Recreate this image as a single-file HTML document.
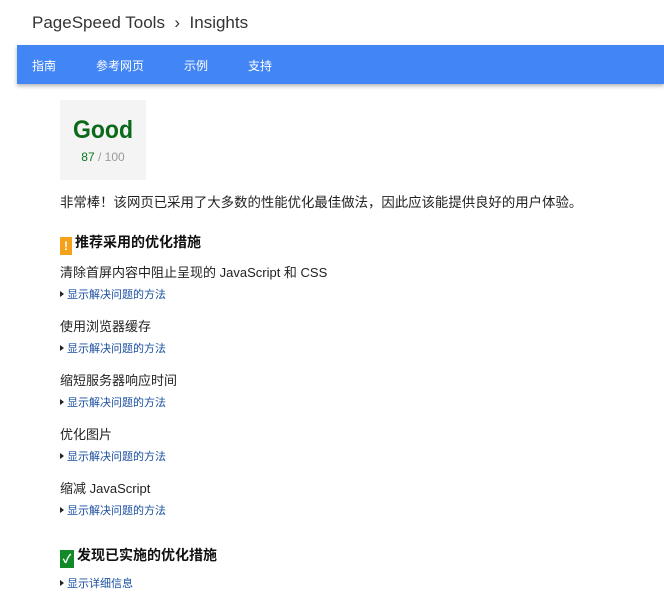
<!DOCTYPE html>
<html><head><meta charset="utf-8"><style>
body{margin:0;width:664px;height:600px;background:#fff;font-family:"Liberation Sans","Noto Sans CJK SC",sans-serif;position:relative;overflow:hidden;color:#222}
.a{position:absolute;white-space:nowrap}
.t{left:32px;top:13px;font-size:17px;color:#333}
.bar{left:17px;top:45px;width:647px;height:39px;background:#4285f4;box-shadow:0 2px 4px rgba(0,0,0,.3)}
.bar span{position:absolute;top:12px;font-size:12px;color:#fff}
.box{left:60px;top:100px;width:86px;height:80px;background:#f4f4f4;text-align:center}
.g{font-size:25px;font-weight:bold;color:#0b6a1a;margin-top:16px;line-height:28px;transform:scaleX(.92)}
.s{font-size:12px;color:#999;margin-top:6px}
.it{left:60px;font-size:13px;color:#222}
.lk{left:60px;font-size:11px;color:#1a4fa0}
.lk:before{content:"";display:inline-block;border-left:4px solid #222;border-top:3px solid transparent;border-bottom:3px solid transparent;margin-right:3px;vertical-align:1px}
.h{left:60px;font-size:14px;font-weight:bold;color:#111}
.ic{display:inline-block;width:12px;height:18px;vertical-align:-3px;margin-right:3px;color:#fff;text-align:center;font-size:12px;line-height:18px}
</style></head><body>
<div class="a t">PageSpeed Tools &nbsp;›&nbsp; Insights</div>
<div class="a bar"><span style="left:15px">指南</span><span style="left:79px">参考网页</span><span style="left:167px">示例</span><span style="left:231px">支持</span></div>
<div class="a box"><div class="g">Good</div><div class="s"><span style="color:#0b7a1e">87</span> / 100</div></div>
<div class="a it" style="top:191px;font-size:13.4px">非常棒！该网页已采用了大多数的性能优化最佳做法，因此应该能提供良好的用户体验。</div>
<div class="a h" style="top:232px"><span class="ic" style="background:#f3a21a">!</span>推荐采用的优化措施</div>
<div class="a it" style="top:262px">清除首屏内容中阻止呈现的 JavaScript 和 CSS</div>
<div class="a lk" style="top:286px">显示解决问题的方法</div>
<div class="a it" style="top:316px">使用浏览器缓存</div>
<div class="a lk" style="top:340px">显示解决问题的方法</div>
<div class="a it" style="top:370px">缩短服务器响应时间</div>
<div class="a lk" style="top:394px">显示解决问题的方法</div>
<div class="a it" style="top:424px">优化图片</div>
<div class="a lk" style="top:448px">显示解决问题的方法</div>
<div class="a it" style="top:478px">缩减 JavaScript</div>
<div class="a lk" style="top:502px">显示解决问题的方法</div>
<div class="a h" style="top:545px"><span class="ic" style="background:#138a2a;width:14px">✓</span>发现已实施的优化措施</div>
<div class="a lk" style="top:575px">显示详细信息</div>
</body></html>
